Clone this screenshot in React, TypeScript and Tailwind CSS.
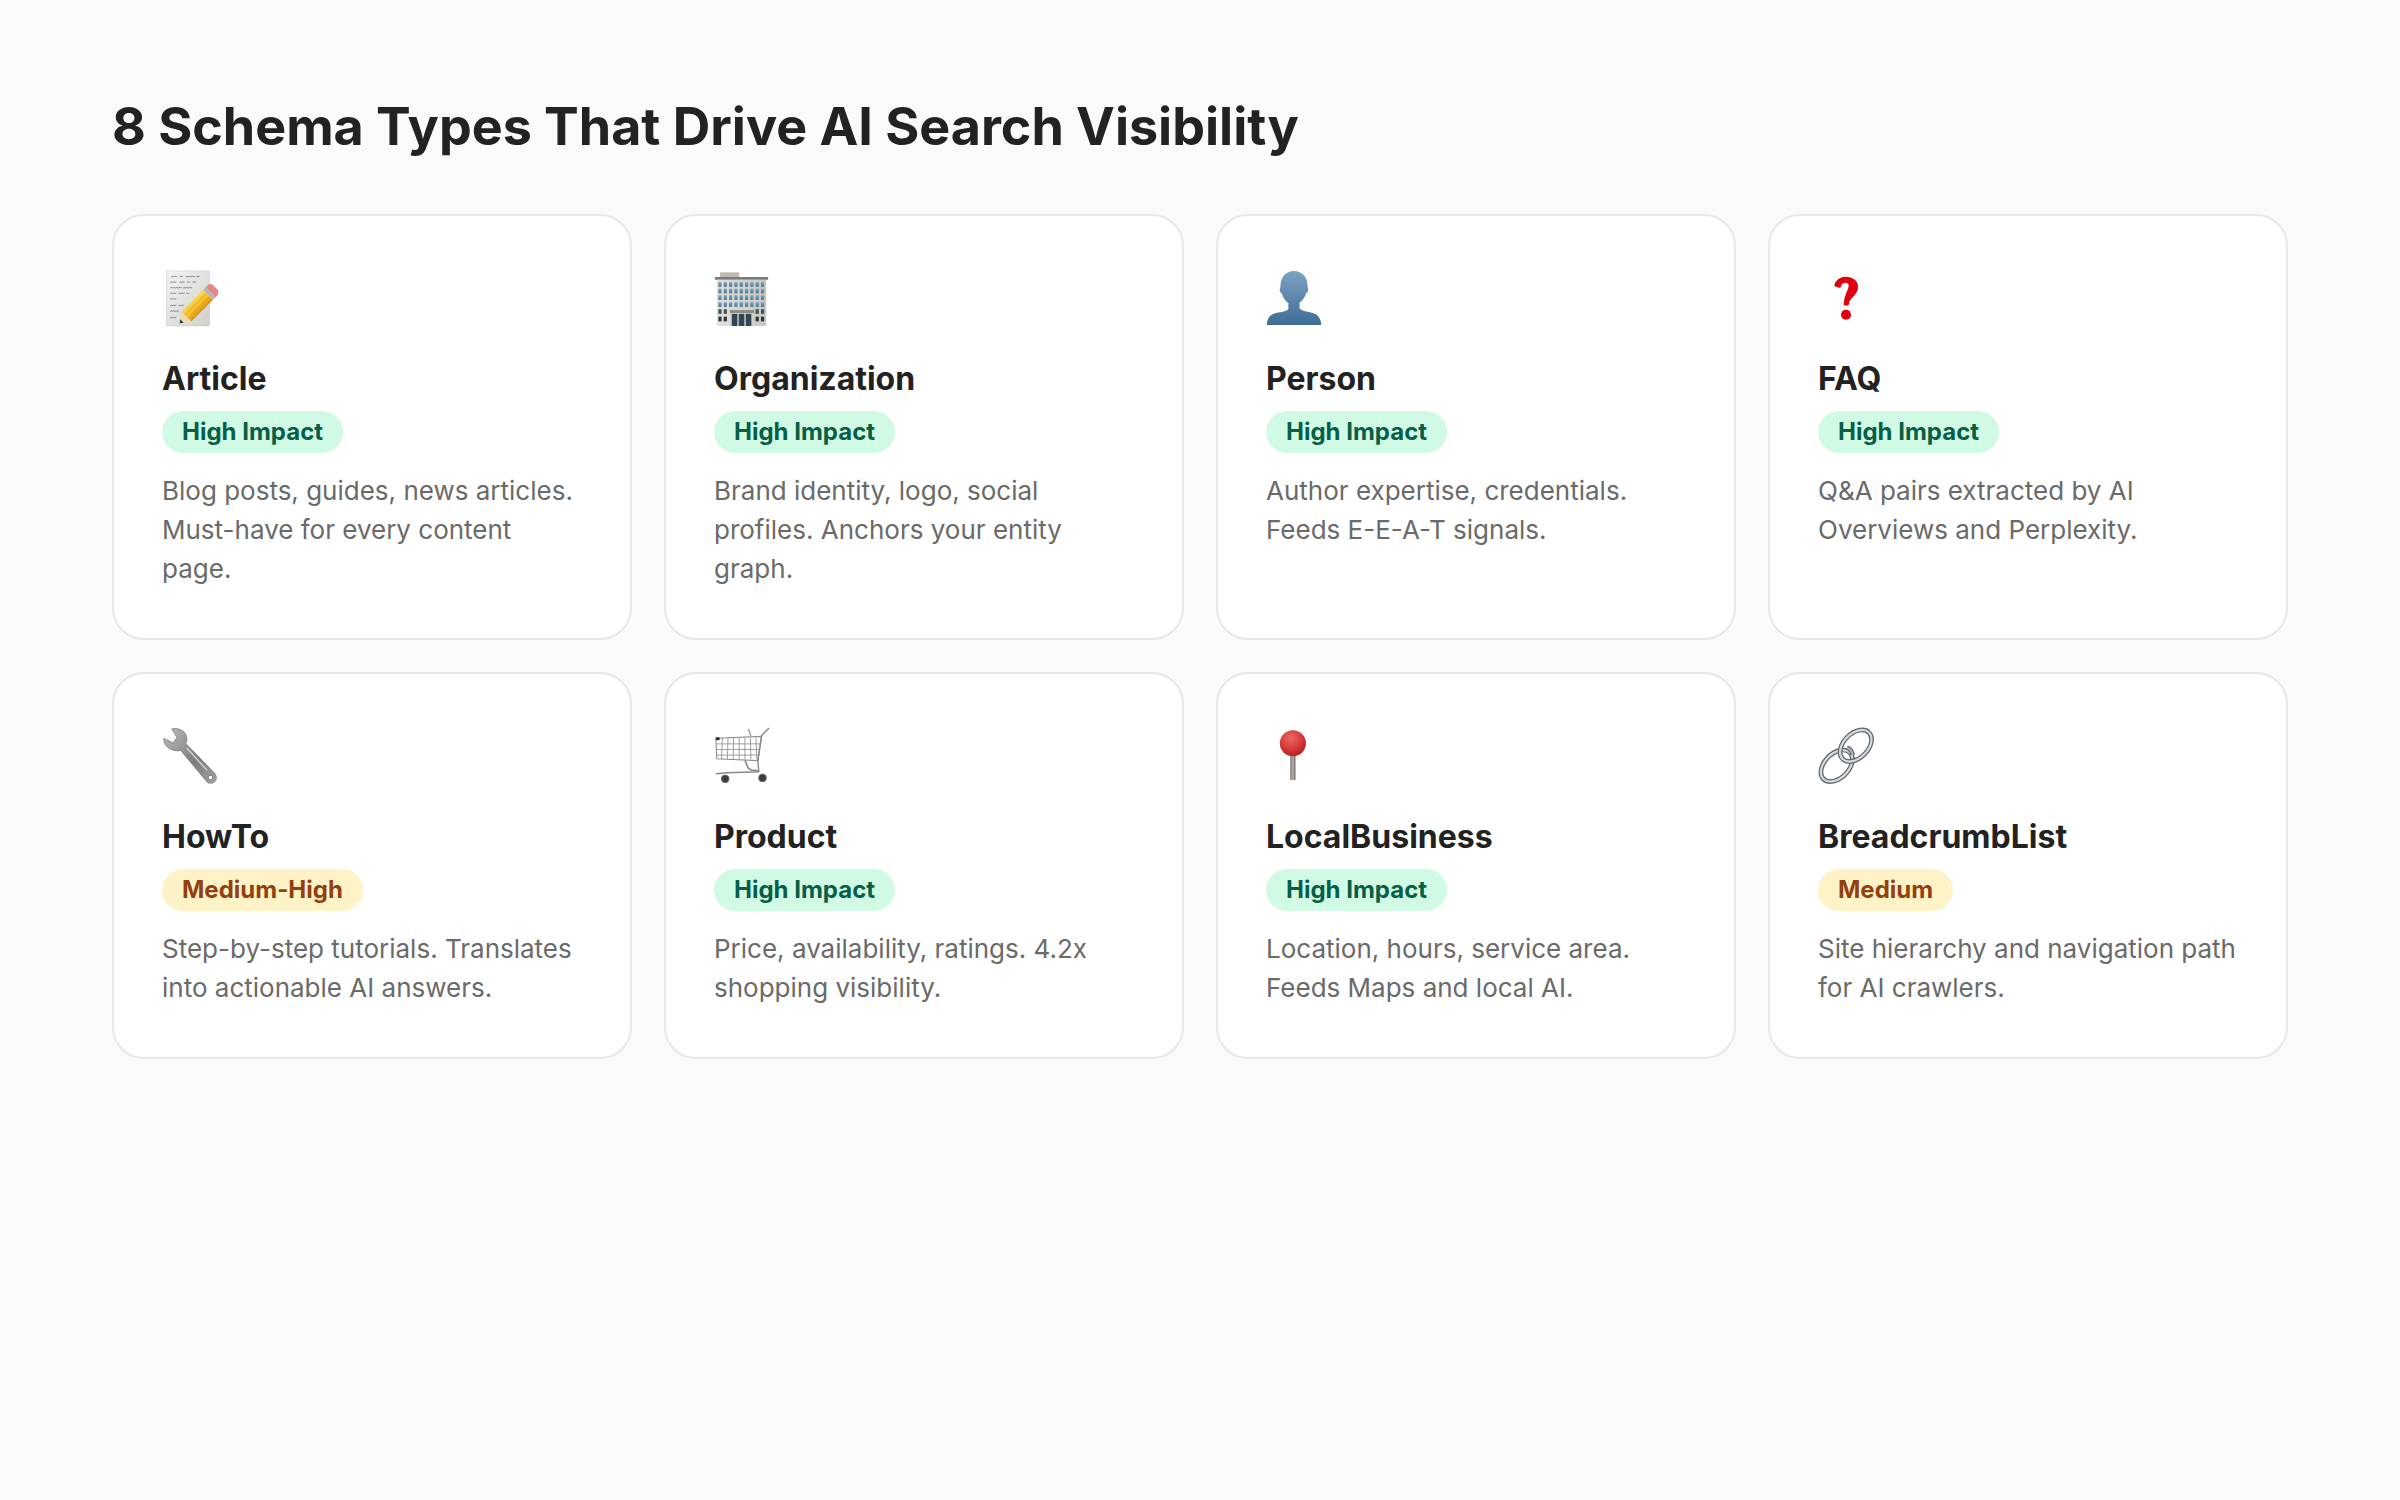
import type { ReactNode } from "react";

function ArticleIcon() {
  return (
    <svg viewBox="0 0 60 64" className="h-full w-full" aria-hidden="true">
      <defs>
        <linearGradient id="paper" x1="0" y1="0" x2="1" y2="1">
          <stop offset="0" stopColor="#f2f2f0" />
          <stop offset="1" stopColor="#d0d0ce" />
        </linearGradient>
        <linearGradient id="pencil" x1="0" y1="0" x2="1" y2="0">
          <stop offset="0" stopColor="#fcd64f" />
          <stop offset="0.55" stopColor="#f5bc2c" />
          <stop offset="1" stopColor="#d98f10" />
        </linearGradient>
      </defs>
      <rect x="4.500" y="3" width="46.500" height="59" fill="url(#paper)" stroke="#c6c6c4" strokeWidth="0.5" />
      <g fill="none" stroke="#3f3f3f" strokeWidth="0.6" strokeLinecap="round">
        <path d="M10 9c1-1.500 2 1 3 0s2 1 3 0m3 0c1-1.500 2 1 3 0m4 0c1-1 2 1 3 0s2 1 3 0 2 1 3 0m2 0c1-1 2 1 3 0" />
        <path d="M9 15c1-1.500 2 1 3 0s2 1 3 0m4 0c1-1 2 1 3 0s2 1 2 0m3 0c1-1 2 1 3 0m3 0c1-1 2 1 3 0" />
        <path d="M9 21c1-1.500 2 1 3 0s2 1 3 0 2 1 3 0 2 1 3 0m2 0c1-1 2 1 3 0s2 1 3 0 2 1 3 0" />
        <path d="M9 27c1-1.500 2 1 3 0s2 1 3 0m3 0c1-1 2 1 3 0s2 1 3 0m2 0c1-1 2 1 3 0" />
        <path d="M9 33c1-1.500 2 1 3 0s2 1 3 0" />
        <path d="M9 40c1-1.500 2 1 3 0s2 1 3 0m3 0c1-1 2 1 3 0s2 1 2 0" />
        <path d="M9 46c1-1.500 2 1 3 0s2 1 3 0 2 1 3 0" />
        <path d="M9 53c1-1.500 2 1 3 0s2 1 3 0" />
      </g>
      <g transform="translate(19 59) rotate(45)">
        <path d="M-7.500 -10h15v-33h-15z" fill="url(#pencil)" />
        <path d="M-7.500 -10l7.500 10 7.500-10z" fill="#efd8ae" />
        <path d="M-2.500 -3.300h5l-2.500 3.300z" fill="#2f2f2f" />
        <rect x="-7.500" y="-47" width="15" height="4" fill="#b5b5b5" />
        <path d="M-7.500 -47v-3q0-4 4-4h7q4 0 4 4v3z" fill="#e8848b" />
        <path d="M-2.500 -10v-33M2.500 -10v-33" stroke="#d9980f" strokeWidth="0.5" />
      </g>
    </svg>
  );
}

function BuildingIcon() {
  const cols = [6.4, 12.1, 17.8, 23.5, 29.2, 34.9, 40.6, 46.3, 52];
  const rows = [15, 22, 29, 36.5];
  const sideCols = [6.4, 12.1, 46.3, 52];
  return (
    <svg viewBox="0 0 60 64" className="h-full w-full" aria-hidden="true">
      <defs>
        <linearGradient id="wall" x1="0" y1="0" x2="1" y2="0">
          <stop offset="0" stopColor="#e4e1dc" />
          <stop offset="1" stopColor="#c9c6c1" />
        </linearGradient>
        <linearGradient id="win" x1="0" y1="0" x2="0" y2="1">
          <stop offset="0" stopColor="#7ba8c2" />
          <stop offset="1" stopColor="#47758f" />
        </linearGradient>
      </defs>
      <rect x="6.500" y="4.500" width="20.500" height="5.500" fill="#bcb9b3" />
      <rect x="1" y="9.500" width="57" height="3" fill="#7d7a74" />
      <rect x="3" y="12.500" width="53" height="49.500" fill="url(#wall)" />
      {rows.map((y) =>
        cols.map((x) => <rect key={`${x}-${y}`} x={x - 1.7} y={y} width="3.400" height="5" fill="url(#win)" />)
      )}
      {sideCols.map((x) => (
        <rect key={x} x={x - 1.7} y="44" width="3.400" height="5" fill="#35555f" />
      ))}
      {sideCols.map((x) => (
        <rect key={`b${x}`} x={x - 1.7} y="52" width="3.400" height="5" fill="#26343b" />
      ))}
      <rect x="17" y="45" width="26" height="3" fill="#8b8880" />
      <rect x="19" y="49" width="6" height="13" fill="#2f4755" />
      <rect x="26.500" y="49" width="6" height="13" fill="#2f4755" />
      <rect x="34" y="49" width="6" height="13" fill="#2f4755" />
    </svg>
  );
}

function PersonIcon() {
  return (
    <svg viewBox="0 0 60 64" className="h-full w-full" aria-hidden="true">
      <defs>
        <linearGradient id="bust" x1="0" y1="0" x2="0" y2="1">
          <stop offset="0" stopColor="#7ba3c4" />
          <stop offset="1" stopColor="#3f6b95" />
        </linearGradient>
      </defs>
      <path
        d="M30 3c-9 0-14.500 7-14.500 16 0 2-.800 3.500-.800 5 0 1.500 1 2.500 2 3 1.500 5 4.500 8.500 7.300 10.500v6c-.300 1.500-3 2.500-7 3.500C10 48 4.500 49 2.500 54 1.500 56 1 58 .8 61h58.400c-.200-3-.700-5-1.700-7-2-5-7.500-6-14.500-7.500-4-1-6.700-2-7-3.500v-6c2.800-2 5.800-5.500 7.300-10.500 1-.500 2-1.500 2-3 0-1.500-.800-3-.800-5C44.500 10 39 3 30 3z"
        fill="url(#bust)"
      />
    </svg>
  );
}

function QuestionIcon() {
  return (
    <svg viewBox="0 0 60 64" className="h-full w-full" aria-hidden="true">
      <g transform="translate(3 3.200) scale(0.9)">
        <path
          d="M17.500 17c1-5.500 6-9 12.500-9 7.500 0 13 4.500 13 11 0 5-2.500 8-6 11-3 2.600-4.500 4.500-5 9.500h-3.500c0-6 1.500-10 3.500-14 1.700-3.400 2.500-5.500 2.500-8 0-3-2-5-5-5-3.500 0-6 2-7 6z"
          fill="#e0000f"
          stroke="#e0000f"
          strokeWidth="2.600"
          strokeLinejoin="round"
        />
        <circle cx="30" cy="52" r="6" fill="#e0000f" />
      </g>
    </svg>
  );
}

function WrenchIcon() {
  return (
    <svg viewBox="0 0 60 64" className="h-full w-full" aria-hidden="true">
      <defs>
        <linearGradient id="steel" x1="0" y1="0" x2="1" y2="1">
          <stop offset="0" stopColor="#bcbcbf" />
          <stop offset="0.6" stopColor="#7c7c80" />
          <stop offset="1" stopColor="#a3a3a6" />
        </linearGradient>
      </defs>
      <path
        d="M10.500 3c6-1.500 13 1 15.500 7 1.200 3 .800 6-.500 8.500L56 50c3 3.500 3 7 .500 9.500-2.500 2.500-6.500 2.500-9-.500L20 26c-5 1-10.500 0-14-3.500C3 19.500 1.500 17 2 13l10 5 4-6z"
        fill="url(#steel)"
        stroke="#6e6e72"
        strokeWidth="0.7"
      />
      <circle cx="52" cy="55" r="2.400" fill="#fff" stroke="#5d5d60" strokeWidth="0.8" />
      <path d="M27 24l21 23" stroke="#d5d5d8" strokeWidth="1.400" strokeLinecap="round" />
    </svg>
  );
}

function CartIcon() {
  const vert = [9, 15, 21, 27, 33, 39, 45];
  return (
    <svg viewBox="0 0 60 64" className="h-full w-full" aria-hidden="true">
      <g fill="none" stroke="#8e8e90" strokeWidth="0.9">
        <path d="M2 13l49-2-4 26-44-2z" strokeWidth="1.200" />
        {vert.map((x, i) => (
          <path key={x} d={`M${x} 12.500l${-1 + i * 0.3} 23`} />
        ))}
        <path d="M2.500 19h47.500M3 25h46M3 31h45" />
      </g>
      <path d="M37 3l2.500 8" stroke="#a0a0a2" strokeWidth="1.600" fill="none" />
      <path d="M59 2l-8 8-4 27 1 12-34 1-12 1" stroke="#8b8b8e" strokeWidth="1.600" fill="none" strokeLinejoin="round" />
      <path d="M33 37c3 3 1 8 7 10l8 1" stroke="#8b8b8e" strokeWidth="1.800" fill="none" />
      <rect x="2" y="12" width="4" height="3" fill="#27303a" />
      <circle cx="12" cy="56.500" r="4.200" fill="#3d3d3f" stroke="#7a7a7c" />
      <circle cx="52" cy="55.500" r="4.200" fill="#3d3d3f" stroke="#7a7a7c" />
    </svg>
  );
}

function PinIcon() {
  return (
    <svg viewBox="0 0 60 64" className="h-full w-full" aria-hidden="true">
      <defs>
        <radialGradient id="ball" cx="0.42" cy="0.32" r="0.7">
          <stop offset="0" stopColor="#e86a62" />
          <stop offset="0.6" stopColor="#d63a38" />
          <stop offset="1" stopColor="#b51e22" />
        </radialGradient>
        <linearGradient id="needle" x1="0" y1="0" x2="1" y2="0">
          <stop offset="0" stopColor="#77726e" />
          <stop offset="0.5" stopColor="#b5b1ac" />
          <stop offset="1" stopColor="#6b6662" />
        </linearGradient>
      </defs>
      <rect x="26" y="30" width="5.600" height="27.600" fill="url(#needle)" />
      <circle cx="28.800" cy="18.300" r="14" fill="url(#ball)" />
    </svg>
  );
}

function LinkIcon() {
  const upper = "rotate(45 40.500 21)";
  const lower = "rotate(45 20 42.500)";
  return (
    <svg viewBox="0 0 60 64" className="h-full w-full" aria-hidden="true">
      <g fill="none">
        <ellipse cx="20" cy="42.500" rx="13" ry="20" transform={lower} stroke="#5d646b" strokeWidth="5" />
        <ellipse cx="20" cy="42.500" rx="13" ry="20" transform={lower} stroke="#d5dade" strokeWidth="2.400" />
        <ellipse cx="40.500" cy="21" rx="13" ry="20" transform={upper} stroke="#5d646b" strokeWidth="5" />
        <ellipse cx="40.500" cy="21" rx="13" ry="20" transform={upper} stroke="#d5dade" strokeWidth="2.400" />
      </g>
      <path d="M31 23c3 1 5.500 4 6 8" fill="none" stroke="#5d646b" strokeWidth="5" />
      <path d="M31 23c3 1 5.500 4 6 8" fill="none" stroke="#a9b0b6" strokeWidth="2.400" />
    </svg>
  );
}

type SchemaCard = {
  icon: ReactNode;
  name: string;
  impact: "High Impact" | "Medium-High" | "Medium";
  desc: string;
};

const CARDS: SchemaCard[] = [
  { icon: <ArticleIcon />, name: "Article", impact: "High Impact", desc: "Blog posts, guides, news articles. Must-have for every content page." },
  { icon: <BuildingIcon />, name: "Organization", impact: "High Impact", desc: "Brand identity, logo, social profiles. Anchors your entity graph." },
  { icon: <PersonIcon />, name: "Person", impact: "High Impact", desc: "Author expertise, credentials. Feeds E-E-A-T signals." },
  { icon: <QuestionIcon />, name: "FAQ", impact: "High Impact", desc: "Q&A pairs extracted by AI Overviews and Perplexity." },
  { icon: <WrenchIcon />, name: "HowTo", impact: "Medium-High", desc: "Step-by-step tutorials. Translates into actionable AI answers." },
  { icon: <CartIcon />, name: "Product", impact: "High Impact", desc: "Price, availability, ratings. 4.2x shopping visibility." },
  { icon: <PinIcon />, name: "LocalBusiness", impact: "High Impact", desc: "Location, hours, service area. Feeds Maps and local AI." },
  { icon: <LinkIcon />, name: "BreadcrumbList", impact: "Medium", desc: "Site hierarchy and navigation path for AI crawlers." },
];

export default function App() {
  return (
    <div className="min-h-[1500px] bg-[#fafafa] px-[112px] pt-[88px] font-['Inter',sans-serif]">
      <h1 className="mb-[48px] text-[52px] leading-[78px] font-bold text-[#222222]">
        8 Schema Types That Drive AI Search Visibility
      </h1>
      <div className="grid grid-cols-4 gap-[32px]">
        {CARDS.map((card) => (
          <div key={card.name} className="rounded-[32px] border-2 border-[#e8e8e8] bg-white px-[48px] pt-[48px] pb-[50px]">
            <div className="mt-[4px] mb-[29px] h-[60px] w-[56px]">{card.icon}</div>
            <h3 className="mb-[10px] text-[32px] leading-[44px] font-bold text-[#222222]">{card.name}</h3>
            {card.impact === "High Impact" ? (
              <span className="block w-fit rounded-full bg-[#d1fae5] px-[20px] py-[4px] text-[24px] leading-[34px] font-bold text-[#065f46]">
                {card.impact}
              </span>
            ) : (
              <span className="block w-fit rounded-full bg-[#fef3c7] px-[20px] py-[4px] text-[24px] leading-[34px] font-bold text-[#92400e]">
                {card.impact}
              </span>
            )}
            <p className="mt-[18px] text-[26px] leading-[39px] text-[#6a6a6a]">{card.desc}</p>
          </div>
        ))}
      </div>
    </div>
  );
}
